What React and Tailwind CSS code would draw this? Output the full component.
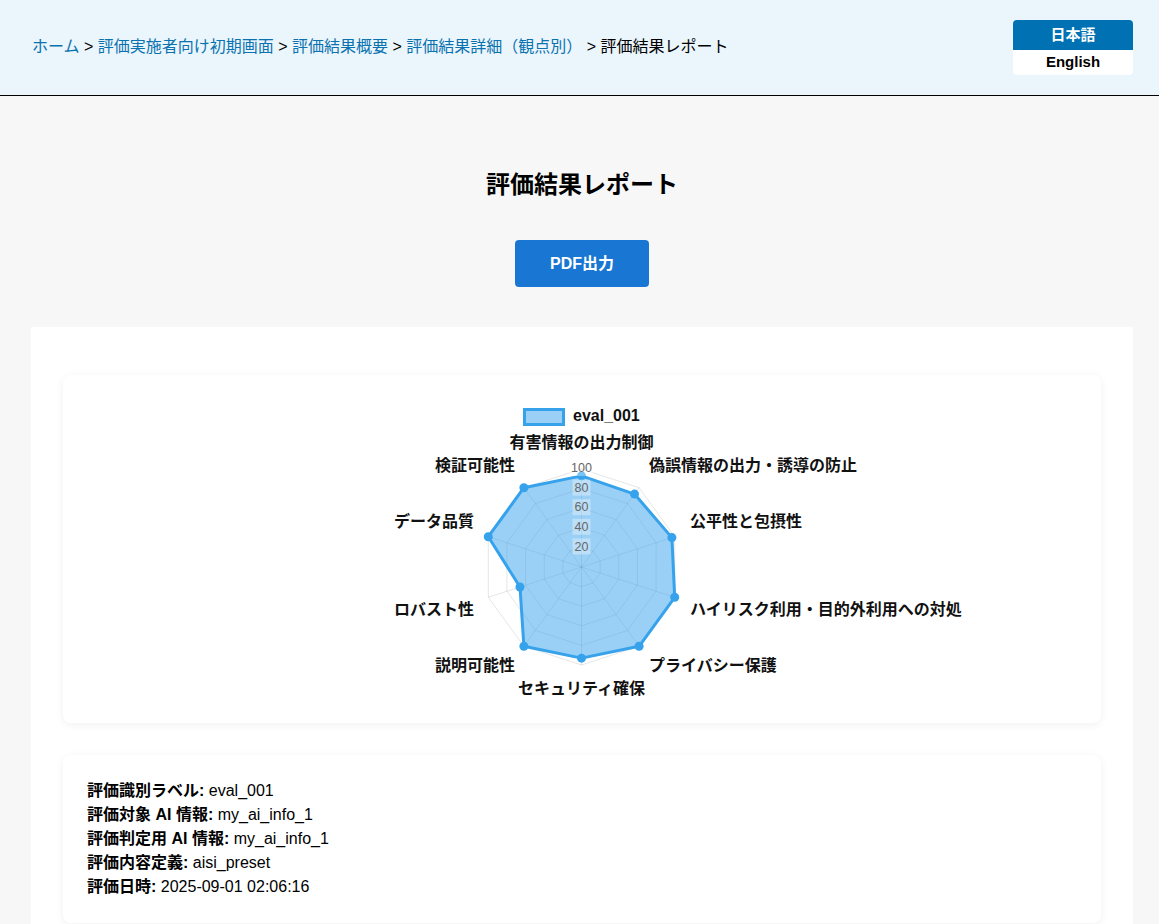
const font = { fontFamily: '"Liberation Sans", "Noto Sans CJK JP", sans-serif' };

const labels = [
  { text: '有害情報の出力制御', x: 299.5, y: 67, anchor: 'middle' },
  { text: '偽誤情報の出力・誘導の防止', x: 367, y: 90, anchor: 'start' },
  { text: '公平性と包摂性', x: 408, y: 146, anchor: 'start' },
  { text: 'ハイリスク利用・目的外利用への対処', x: 408, y: 234, anchor: 'start' },
  { text: 'プライバシー保護', x: 367, y: 290, anchor: 'start' },
  { text: 'セキュリティ確保', x: 299.5, y: 313, anchor: 'middle' },
  { text: '説明可能性', x: 233, y: 290, anchor: 'end' },
  { text: 'ロバスト性', x: 192, y: 234, anchor: 'end' },
  { text: 'データ品質', x: 192, y: 146, anchor: 'end' },
  { text: '検証可能性', x: 233, y: 90, anchor: 'end' },
];

const values = [93, 92, 97, 100, 100, 93, 100, 66, 100, 100];

const info = [
  ['評価識別ラベル:', 'eval_001'],
  ['評価対象 AI 情報:', 'my_ai_info_1'],
  ['評価判定用 AI 情報:', 'my_ai_info_1'],
  ['評価内容定義:', 'aisi_preset'],
  ['評価日時:', '2025-09-01 02:06:16'],
];

const CX = 299.5;
const CY = 192;
const R = 98;

const pt = (i, r) => {
  const a = (i * 36 * Math.PI) / 180;
  return [CX + r * Math.sin(a), CY - r * Math.cos(a)];
};

const poly = (r) => values.map((_, i) => pt(i, r).join(',')).join(' ');

function RadarChart() {
  const dataPts = values.map((v, i) => pt(i, (v / 100) * R));
  return (
    <svg width="800" height="348" viewBox="-100 0 800 348" style={font}>
      {/* legend */}
      <rect x="242.5" y="34.5" width="39" height="15" fill="rgba(54,162,235,0.5)" stroke="#36a2eb" strokeWidth="3" />
      <text x="291" y="42" dominantBaseline="middle" fontSize="16" fontWeight="700" fill="#111">eval_001</text>

      {/* grid */}
      {[1, 2, 3, 4, 5].map((k) => (
        <polygon key={k} points={poly((R * k) / 5)} fill="none" stroke="rgba(0,0,0,0.1)" strokeWidth="1" />
      ))}
      {values.map((_, i) => {
        const [x, y] = pt(i, R);
        return <line key={i} x1={CX} y1={CY} x2={x} y2={y} stroke="rgba(0,0,0,0.1)" strokeWidth="1" />;
      })}

      {/* dataset */}
      <polygon
        points={dataPts.map((p) => p.join(',')).join(' ')}
        fill="rgba(54,162,235,0.5)"
        stroke="#36a2eb"
        strokeWidth="3"
        strokeLinejoin="round"
      />
      {dataPts.map(([x, y], i) => (
        <circle key={i} cx={x} cy={y} r="4.5" fill="#36a2eb" />
      ))}

      {/* ticks */}
      {[20, 40, 60, 80, 100].map((t) => {
        const y = CY - (R * t) / 100;
        const w = t === 100 ? 24 : 18;
        return (
          <g key={t}>
            <rect x={CX - w / 2} y={y - 9} width={w} height="16" fill="rgba(255,255,255,0.35)" />
            <text x={CX} y={y} textAnchor="middle" dominantBaseline="middle" fontSize="12.5" fill="#666">{t}</text>
          </g>
        );
      })}

      {/* point labels */}
      {labels.map((l) => (
        <text key={l.text} x={l.x} y={l.y + 2} textAnchor={l.anchor} dominantBaseline="middle" fontSize="16" fontWeight="700" fill="#111">
          {l.text}
        </text>
      ))}
    </svg>
  );
}

const App = () => {
  return (
    <div className="min-h-screen bg-[#f7f7f7] text-black" style={font}>
      <header className="h-[96px] bg-[#eaf5fc] border-b border-black pl-[32px] pr-[26px] flex items-center justify-between">
        <nav className="text-[16px] leading-[24px] mt-[-1px]">
          <a className="text-[#0b72b0]">ホーム</a>
          <span> &gt; </span>
          <a className="text-[#0b72b0]">評価実施者向け初期画面</a>
          <span> &gt; </span>
          <a className="text-[#0b72b0]">評価結果概要</a>
          <span> &gt; </span>
          <a className="text-[#0b72b0]">評価結果詳細（観点別）</a>
          <span> &gt; </span>
          <span>評価結果レポート</span>
        </nav>
        <div className="flex flex-col w-[120px] mt-[-1px]">
          <button className="h-[30px] pt-[2px] bg-[#0071b3] text-white font-bold text-[15px] rounded-t-[4px]">日本語</button>
          <button className="h-[25px] bg-white text-black font-bold text-[15px] rounded-b-[4px]">English</button>
        </div>
      </header>

      <main className="pt-[73px] pl-[31px] pr-[26px]">
        <h1 className="text-center text-[24px] leading-[32px] font-bold">評価結果レポート</h1>
        <div className="flex justify-center mt-[39px]">
          <button className="w-[134px] h-[47px] bg-[#1976d2] text-white text-[16px] font-bold rounded-[4px]">PDF出力</button>
        </div>

        <section className="mt-[40px] bg-white pt-[48px] px-[32px] pb-[32px]">
          <div className="h-[348px] bg-white rounded-lg shadow-[0_2px_10px_rgba(0,0,0,0.06)] flex justify-center">
            <RadarChart />
          </div>

          <div className="mt-[32px] bg-white rounded-lg shadow-[0_2px_10px_rgba(0,0,0,0.06)] p-[24px] text-[16px] leading-[24px]">
            {info.map(([k, v]) => (
              <div key={k}>
                <span className="font-bold">{k}</span> {v}
              </div>
            ))}
          </div>
        </section>
      </main>
    </div>
  );
};

export default App;
